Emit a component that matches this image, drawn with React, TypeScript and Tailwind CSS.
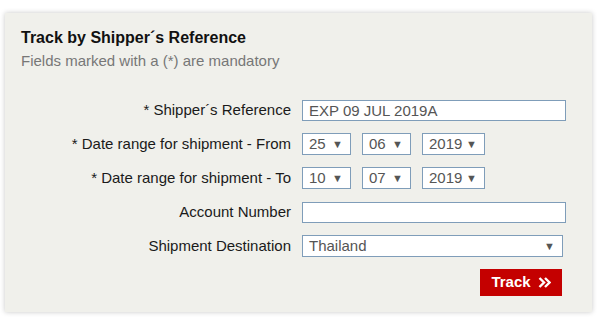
import React from "react";

const Select = (props: { value: string; width: string }) => (
	<div
		className={`${props.width} h-[22px] bg-white border border-[#7f9db9] flex items-center justify-between pl-[6px] pr-[7px] text-[15px] text-[#555]`}
	>
		<span>{props.value}</span>
		<span className="text-[11px] text-[#555]">▼</span>
	</div>
);

const Label = (props: { text: string }) => (
	<div className="text-right text-[15px] text-[#1a1a1a] h-[34px] flex items-center justify-end">{props.text}</div>
);

const App = () => {
	return (
		<div className="w-[599px] h-[321px] bg-white relative" style={{ fontFamily: '"Liberation Sans", Arial, sans-serif' }}>
			<div className="absolute left-[5px] top-[13px] w-[587px] h-[299px] bg-[#f0f0eb] shadow-[0_0_5px_rgba(0,0,0,0.22)] pl-[16px] pr-[30px] pt-[15px]">
				<h1 className="text-[16px] leading-[20px] font-bold text-[#111]">Track by Shipper´s Reference</h1>
				<p className="text-[15px] leading-[20px] text-[#777] mt-[3px]">Fields marked with a (*) are mandatory</p>

				<div className="grid grid-cols-[270px_1fr] gap-x-[11px] mt-[22px]">
					<Label text="* Shipper´s Reference" />
					<div className="flex items-center">
						<div className="w-[264px] h-[21px] bg-white border border-[#7f9db9] pl-[6px] text-[15px] leading-[19px] text-[#555]">
							EXP 09 JUL 2019A
						</div>
					</div>

					<Label text="* Date range for shipment - From" />
					<div className="flex items-center gap-[11px]">
						<Select value="25" width="w-[49px]" />
						<Select value="06" width="w-[49px]" />
						<Select value="2019" width="w-[63px]" />
					</div>

					<Label text="* Date range for shipment - To" />
					<div className="flex items-center gap-[11px]">
						<Select value="10" width="w-[49px]" />
						<Select value="07" width="w-[49px]" />
						<Select value="2019" width="w-[63px]" />
					</div>

					<Label text="Account Number" />
					<div className="flex items-center">
						<div className="w-[264px] h-[21px] bg-white border border-[#7f9db9]" />
					</div>

					<Label text="Shipment Destination" />
					<div className="flex items-center">
						<Select value="Thailand" width="w-[261px]" />
					</div>
				</div>

				<div className="flex justify-end mt-[6px]">
					<button className="w-[82px] h-[27px] bg-[#c40000] text-white font-bold text-[15px] flex items-center justify-center gap-[7px]">
						<span>Track</span>
						<svg width="13" height="11" viewBox="0 0 13 11" fill="none" stroke="white" strokeWidth="2.4" strokeLinejoin="miter">
							<path d="M1.5 1 L6 5.5 L1.5 10" />
							<path d="M7 1 L11.5 5.5 L7 10" />
						</svg>
					</button>
				</div>
			</div>
		</div>
	);
};

export default App;
